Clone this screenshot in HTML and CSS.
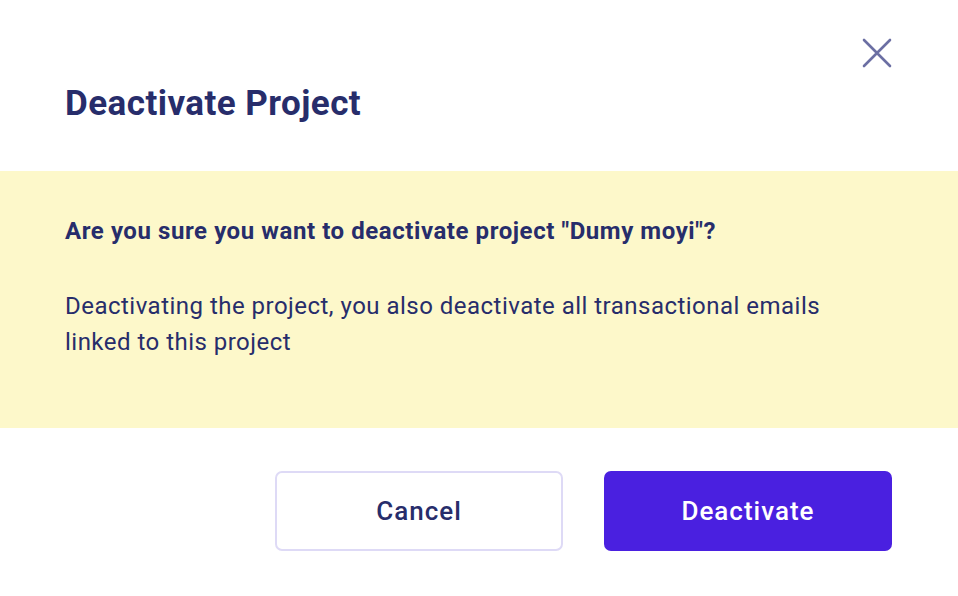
FILE: index.html
```html
<!DOCTYPE html>
<html lang="en">
<head>
<meta charset="utf-8">
<title>Deactivate Project</title>
<link rel="stylesheet" href="styles.css">
</head>
<body>
<div class="dialog">
  <div class="header">
    <h1 class="title">Deactivate Project</h1>
    <button class="close" aria-label="Close">
      <svg width="30" height="30" viewBox="0 0 30 30"><path d="M2 2 L28 28 M28 2 L2 28" stroke="#6b6fa3" stroke-width="2.6" stroke-linecap="round" fill="none"/></svg>
    </button>
  </div>
  <div class="notice">
    <p class="question">Are you sure you want to deactivate project "Dumy moyi"?</p>
    <p class="desc">Deactivating the project, you also deactivate all transactional emails linked to this project</p>
  </div>
  <div class="actions">
    <button class="btn btn-cancel">Cancel</button>
    <button class="btn btn-primary">Deactivate</button>
  </div>
</div>
</body>
</html>
```
FILE: styles.css
```css
html, body {
  margin: 0;
  padding: 0;
  background: #ffffff;
}
body {
  font-family: Roboto, "Liberation Sans", sans-serif;
  color: #272d6b;
}
.dialog {
  width: 958px;
  height: 596px;
  background: #ffffff;
}
.header {
  display: flex;
  justify-content: space-between;
  align-items: flex-start;
  height: 171px;
  padding: 0 66px 0 65px;
  box-sizing: border-box;
}
.title {
  margin: 84px 0 0;
  font-size: 35px;
  line-height: 40px;
  font-weight: 700;
  letter-spacing: 0.45px;
}
.close {
  margin-top: 38px;
  padding: 0;
  border: 0;
  background: none;
  width: 30px;
  height: 30px;
  display: block;
}
.close svg {
  display: block;
}
.notice {
  background: #fdf8ca;
  padding: 42px 66px 68px 65px;
}
.question {
  margin: 0 0 39px;
  font-size: 24px;
  line-height: 36px;
  font-weight: 700;
  letter-spacing: 0.57px;
}
.desc {
  margin: 0;
  max-width: 790px;
  font-size: 24px;
  line-height: 36px;
  font-weight: 400;
  letter-spacing: 0.48px;
}
.actions {
  display: flex;
  justify-content: flex-end;
  gap: 41px;
  padding: 43px 66px 0;
}
.btn {
  width: 288px;
  height: 80px;
  border-radius: 7px;
  font-family: Roboto, "Liberation Sans", sans-serif;
  font-size: 26px;
  font-weight: 500;
  letter-spacing: 1px;
  box-sizing: border-box;
  cursor: pointer;
}
.btn-cancel {
  background: #ffffff;
  border: 2px solid #dedaf6;
  color: #272d6b;
}
.btn-primary {
  background: #4a20e0;
  border: 0;
  color: #ffffff;
}
```
